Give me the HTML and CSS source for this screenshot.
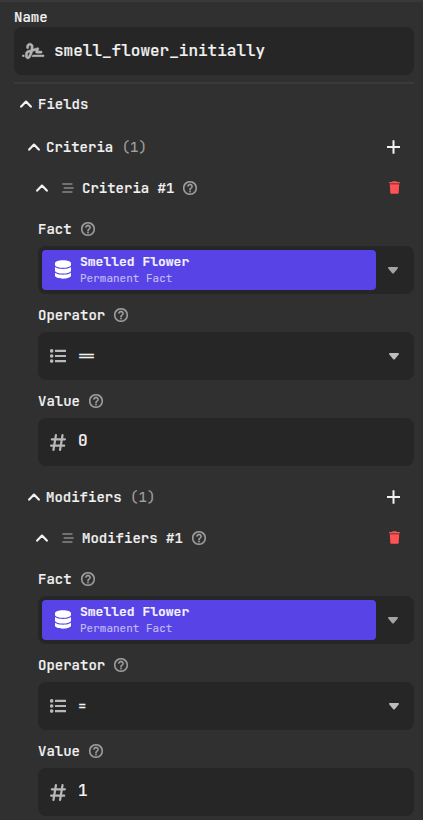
FILE: index.html
```html
<!DOCTYPE html>
<html lang="en">
<head>
<meta charset="utf-8">
<title>Inspector</title>
<link rel="stylesheet" href="styles.css">
</head>
<body>
<svg class="sprite" aria-hidden="true">
  <symbol id="signature" viewBox="0 0 640 512"><path fill="currentColor" stroke="currentColor" stroke-width="12" d="M192 128c0-17.7 14.3-32 32-32s32 14.3 32 32v7.8c0 27.7-2.4 55.3-7.1 82.5l-84.4 25.3c-40.6 12.2-68.4 49.6-68.4 92v71.9c0 40 32.5 72.5 72.5 72.5c26 0 50-13.9 62.9-36.5l13.9-24.3c26.8-47 46.5-97.7 58.4-150.5l94.4-28.3-12.5 37.5c-3.3 9.8-1.6 20.5 4.4 28.8s15.7 13.3 26 13.3H544c17.7 0 32-14.3 32-32s-14.3-32-32-32H460.4l18-53.9c3.8-11.3 .9-23.8-7.4-32.4s-20.7-11.8-32.2-8.4L316.4 198.1c2.4-20.7 3.6-41.4 3.6-62.3V128c0-53-43-96-96-96s-96 43-96 96v32c0 17.7 14.3 32 32 32s32-14.3 32-32V128zm-9.2 177l49-14.7c-10.4 33.8-24.5 66.4-42.1 97.2l-13.9 24.3c-1.5 2.6-4.3 4.3-7.4 4.3c-4.7 0-8.5-3.8-8.5-8.5V335.6c0-14.1 9.3-26.6 22.8-30.6zM24 368c-13.3 0-24 10.7-24 24s10.7 24 24 24H64.3c-.2-2.8-.3-5.6-.3-8.5V368H24zm592 48c13.3 0 24-10.7 24-24s-10.7-24-24-24H305.9c-6.7 16.3-14.2 32.3-22.3 48H616z"/></symbol>
  <symbol id="chevron" viewBox="0 0 12 8"><path fill="none" stroke="currentColor" stroke-width="2.2" stroke-linecap="round" stroke-linejoin="round" d="M1.2 6.6 6 1.6l4.8 5"/></symbol>
  <symbol id="bars" viewBox="0 0 12 10"><path fill="none" stroke="currentColor" stroke-width="1.4" stroke-linecap="round" d="M.8 1h9.2M2.2 5h9M.8 9h9.2"/></symbol>
  <symbol id="help" viewBox="2 2 20 20"><path fill="currentColor" stroke="currentColor" stroke-width=".4" d="M11 18h2v-2h-2v2zm1-16C6.480 2 2 6.480 2 12s4.480 10 10 10 10-4.480 10-10S17.520 2 12 2zm0 18c-4.410 0-8-3.590-8-8s3.590-8 8-8 8 3.590 8 8-3.590 8-8 8zm0-14c-2.210 0-4 1.790-4 4h2c0-1.100.9-2 2-2s2 .9 2 2c0 2-3 1.750-3 5h2c0-2.250 3-2.500 3-5 0-2.210-1.790-4-4-4z"/></symbol>
  <symbol id="plus" viewBox="0 0 13 14"><path fill="none" stroke="currentColor" stroke-width="2" d="M6.500 .2v13.600M0 7h13"/></symbol>
  <symbol id="trash" viewBox="0 0 448 512"><path fill="currentColor" d="M135.200 17.700 128 32H32C14.300 32 0 46.300 0 64s14.300 32 32 32h384c17.700 0 32-14.300 32-32s-14.300-32-32-32h-96l-7.200-14.300C307.400 6.800 296.300 0 284.200 0H163.800c-12.100 0-23.200 6.800-28.600 17.700zM416 128H32l21.200 339c1.600 25.300 22.600 45 47.900 45h245.800c25.300 0 46.300-19.700 47.900-45L416 128z"/></symbol>
  <symbol id="database" viewBox="0 0 448 512"><path fill="currentColor" d="M448 80v48c0 44.200-100.300 80-224 80S0 172.200 0 128V80C0 35.800 100.300 0 224 0s224 35.800 224 80zM393.200 214.700c20.800-7.400 39.900-16.900 54.800-28.600V288c0 44.200-100.300 80-224 80S0 332.200 0 288V186.100c14.900 11.800 34 21.200 54.800 28.600C99.700 230.700 159.500 240 224 240s124.300-9.300 169.200-25.300zM0 346.100c14.900 11.800 34 21.200 54.800 28.600C99.700 390.700 159.500 400 224 400s124.300-9.300 169.200-25.300c20.800-7.400 39.900-16.900 54.800-28.600V432c0 44.200-100.300 80-224 80S0 476.200 0 432v-85.900z"/></symbol>
  <symbol id="list" viewBox="0 0 16 14"><g fill="currentColor"><circle cx="1.700" cy="1.900" r="1.800"/><circle cx="1.700" cy="7" r="1.800"/><circle cx="1.700" cy="12.100" r="1.800"/></g><path fill="none" stroke="currentColor" stroke-width="2.200" d="M5 1.900h11M5 7h11M5 12.100h11"/></symbol>
  <symbol id="hash" viewBox="0 0 16 17"><path fill="none" stroke="currentColor" stroke-width="2.200" stroke-linecap="round" d="M5.900 1.200 3.500 15.800M12.500 1.200l-2.400 14.600M1.800 5.300h13.100M1.100 11.700h13.100"/></symbol>
  <symbol id="down" viewBox="0 0 10 7"><path fill="currentColor" d="M.8 0h8.400c.8 0 1 .9.500 1.500L5.800 6.200c-.4.500-1.200.5-1.600 0L.3 1.500C-.2.900 0 0 .8 0z"/></symbol>
</svg>
<main class="panel">
  <label class="name-label">Name</label>
  <div class="input name-input"><svg class="signature"><use href="#signature"/></svg><span>smell_flower_initially</span></div>
  <div class="divider"></div>
  <header class="fields-header"><svg class="chevron"><use href="#chevron"/></svg><span>Fields</span></header>

  <section class="group">
    <header class="group-header"><svg class="chevron"><use href="#chevron"/></svg><span>Criteria</span><span class="count">(1)</span><svg class="plus"><use href="#plus"/></svg></header>
    <header class="item-header"><svg class="chevron"><use href="#chevron"/></svg><svg class="bars"><use href="#bars"/></svg><span>Criteria #1</span><svg class="help"><use href="#help"/></svg><svg class="trash"><use href="#trash"/></svg></header>
    <div class="field">
      <div class="label">Fact<svg class="help"><use href="#help"/></svg></div>
      <div class="input fact">
        <div class="entry"><svg class="database"><use href="#database"/></svg><div><div class="title">Smelled Flower</div><div class="kind">Permanent Fact</div></div></div>
        <svg class="down"><use href="#down"/></svg>
      </div>
    </div>
    <div class="field">
      <div class="label">Operator<svg class="help"><use href="#help"/></svg></div>
      <div class="input"><svg class="list"><use href="#list"/></svg><span class="operator">==</span><svg class="down"><use href="#down"/></svg></div>
    </div>
    <div class="field">
      <div class="label">Value<svg class="help"><use href="#help"/></svg></div>
      <div class="input"><svg class="hash"><use href="#hash"/></svg><span class="value">0</span></div>
    </div>
  </section>

  <section class="group">
    <header class="group-header"><svg class="chevron"><use href="#chevron"/></svg><span>Modifiers</span><span class="count">(1)</span><svg class="plus"><use href="#plus"/></svg></header>
    <header class="item-header"><svg class="chevron"><use href="#chevron"/></svg><svg class="bars"><use href="#bars"/></svg><span>Modifiers #1</span><svg class="help"><use href="#help"/></svg><svg class="trash"><use href="#trash"/></svg></header>
    <div class="field">
      <div class="label">Fact<svg class="help"><use href="#help"/></svg></div>
      <div class="input fact">
        <div class="entry"><svg class="database"><use href="#database"/></svg><div><div class="title">Smelled Flower</div><div class="kind">Permanent Fact</div></div></div>
        <svg class="down"><use href="#down"/></svg>
      </div>
    </div>
    <div class="field">
      <div class="label">Operator<svg class="help"><use href="#help"/></svg></div>
      <div class="input"><svg class="list"><use href="#list"/></svg><span class="operator">=</span><svg class="down"><use href="#down"/></svg></div>
    </div>
    <div class="field">
      <div class="label">Value<svg class="help"><use href="#help"/></svg></div>
      <div class="input"><svg class="hash"><use href="#hash"/></svg><span class="value">1</span></div>
    </div>
  </section>
</main>
</body>
</html>
```
FILE: styles.css
```css
* { box-sizing: border-box; }
html, body { margin: 0; height: 820px; overflow: hidden; }
body {
  background: #303030;
  color: #f2f2f2;
  font: 500 14px/16px "JetBrains Mono", "DejaVu Sans Mono", monospace;
  -webkit-text-stroke: 0.15px currentColor;
}
svg { display: block; flex: none; }
.sprite { display: none; }
.panel {
  height: 820px;
  padding: 5px 9px 0 14px;
  border-top: 2px solid #393939;
}
.name-label { display: block; height: 20px; line-height: 21px; }
.input {
  display: flex;
  align-items: center;
  height: 48px;
  padding: 0 15px 0 12px;
  border-radius: 8px;
  background: #262626;
}
.name-input { padding-left: 8px; font-size: 16px; }
.name-input span { margin: -1px 0 0 9.500px; }
.signature { width: 22.500px; height: 18px; color: #b4b4b4; }
.divider { height: 2px; margin-top: 7px; background: #3a3a3a; }
.fields-header, .group-header, .item-header { display: flex; align-items: center; }
.fields-header { height: 39px; padding-left: 6px; }
.chevron { width: 12px; height: 8px; margin-right: 6px; }
.group-header { height: 48px; padding-left: 14px; }
.count { margin-left: 8.500px; color: #a2a2a2; font-weight: 400; }
.plus { width: 13px; height: 14px; margin-left: auto; margin-right: 14px; }
.item-header { height: 33px; margin-bottom: 3.600px; padding-left: 22px; }
.item-header .chevron { margin-right: 14px; }
.bars { width: 12px; height: 10px; margin-right: 8px; color: #868686; }
.help { width: 14px; height: 14px; color: #a0a0a0; margin-left: 9px; }
.trash { width: 11px; height: 13px; margin-left: auto; margin-right: 14.500px; color: #ff5252; }
.group + .group { margin-top: 7.600px; }
.field { margin-left: 24px; }
.label { display: flex; align-items: center; height: 38px; padding-top: 4px; }
.fact { padding: 0 16px 0 4px; }
.entry {
  display: flex;
  align-items: center;
  width: 334px;
  height: 40px;
  padding-left: 13px;
  border-radius: 4px;
  background: #5843e6;
}
.database { width: 16px; height: 19px; margin: 0 9px 0 0; color: #fff; }
.title { height: 16px; font-size: 13px; line-height: 16.500px; font-weight: 600; color: #f4f2ff; }
.kind { height: 15px; font-size: 11px; line-height: 16px; font-weight: 400; color: #c3bbf7; }
.down { width: 10px; height: 7px; margin: 1px 0 0 auto; color: #bdbdbd; }
.fact .down { color: #a4a4a4; }
.list { width: 16px; height: 14px; color: #b8b8b8; }
.operator { margin-left: 12px; }
.hash { width: 16px; height: 17px; margin-top: 1px; color: #b8b8b8; }
.value { margin: -2px 0 0 12px; font-size: 16px; }
```
